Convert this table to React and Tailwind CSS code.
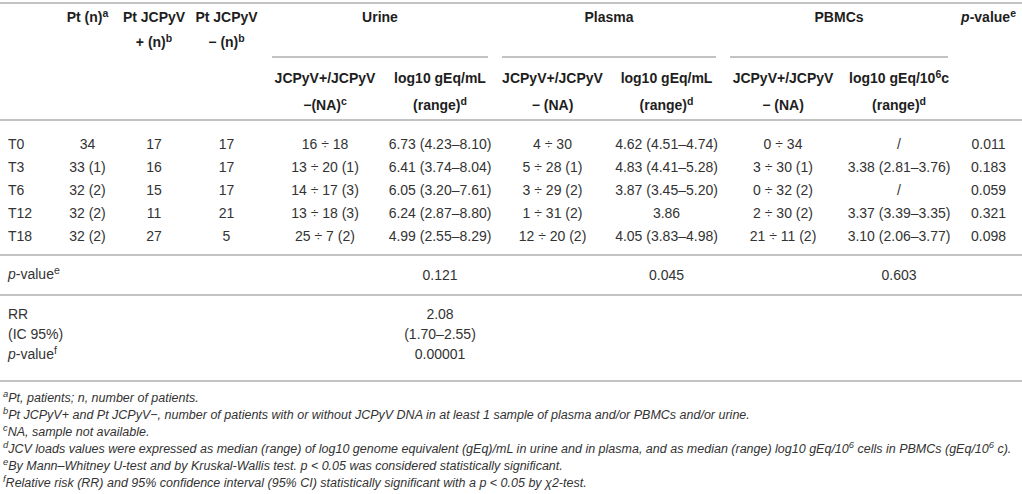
const rows = [
  ['T0', '34', '17', '17', '16 ÷ 18', '6.73 (4.23–8.10)', '4 ÷ 30', '4.62 (4.51–4.74)', '0 ÷ 34', '/', '0.011'],
  ['T3', '33 (1)', '16', '17', '13 ÷ 20 (1)', '6.41 (3.74–8.04)', '5 ÷ 28 (1)', '4.83 (4.41–5.28)', '3 ÷ 30 (1)', '3.38 (2.81–3.76)', '0.183'],
  ['T6', '32 (2)', '15', '17', '14 ÷ 17 (3)', '6.05 (3.20–7.61)', '3 ÷ 29 (2)', '3.87 (3.45–5.20)', '0 ÷ 32 (2)', '/', '0.059'],
  ['T12', '32 (2)', '11', '21', '13 ÷ 18 (3)', '6.24 (2.87–8.80)', '1 ÷ 31 (2)', '3.86', '2 ÷ 30 (2)', '3.37 (3.39–3.35)', '0.321'],
  ['T18', '32 (2)', '27', '5', '25 ÷ 7 (2)', '4.99 (2.55–8.29)', '12 ÷ 20 (2)', '4.05 (3.83–4.98)', '21 ÷ 11 (2)', '3.10 (2.06–3.77)', '0.098'],
];

const widths = [55, 65, 68, 77, 120, 110, 115, 113, 120, 112, 67];

const notes = [
  ['a', <>Pt, patients; n, number of patients.</>],
  ['b', <>Pt JCPyV+ and Pt JCPyV−, number of patients with or without JCPyV DNA in at least 1 sample of plasma and/or PBMCs and/or urine.</>],
  ['c', <>NA, sample not available.</>],
  ['d', <>JCV loads values were expressed as median (range) of log10 genome equivalent (gEq)/mL in urine and in plasma, and as median (range) log10 gEq/10<sup>6</sup> cells in PBMCs (gEq/10<sup>6</sup> c).</>],
  ['e', <>By Mann–Whitney U-test and by Kruskal-Wallis test. p &lt; 0.05 was considered statistically significant.</>],
  ['f', <>Relative risk (RR) and 95% confidence interval (95% CI) statistically significant with a p &lt; 0.05 by χ2-test.</>],
];

function Group({ label }) {
  return (
    <th colSpan={2} className="p-0 align-top font-bold">
      <div className="h-[52px] pt-[1px] leading-[25px]">{label}</div>
      <div className="mx-[7px] h-[2px] bg-[#c3c3c3]" />
    </th>
  );
}

export default function App() {
  const line = 'border-b-2 border-[#c3c3c3]';
  const sub = `p-0 pt-[7px] align-top leading-[27px] font-bold ${line}`;
  const top = `p-0 pt-[1px] align-top leading-[25px] font-bold ${line}`;

  return (
    <div className="w-[1022px] h-[494px] overflow-hidden bg-white pt-[2px] text-[14px] text-[#333] font-['Liberation_Sans',Arial,sans-serif]">
      <table className="w-full table-fixed border-collapse text-center">
        <colgroup>
          {widths.map((w, i) => (
            <col key={i} style={{ width: w }} />
          ))}
        </colgroup>
        <thead className="text-[#1e1e1e]">
          <tr className="border-t-2 border-[#c3c3c3]">
            <th rowSpan={2} className={top} />
            <th rowSpan={2} className={top}>
              Pt (n)<sup>a</sup>
            </th>
            <th rowSpan={2} className={top}>
              Pt JCPyV
              <br />+ (n)<sup>b</sup>
            </th>
            <th rowSpan={2} className={top}>
              Pt JCPyV
              <br />− (n)<sup>b</sup>
            </th>
            <Group label="Urine" />
            <Group label="Plasma" />
            <Group label="PBMCs" />
            <th rowSpan={2} className={top}>
              <i>p</i>-value<sup>e</sup>
            </th>
          </tr>
          <tr>
            <th className={sub}>
              JCPyV+/JCPyV
              <br />
              −(NA)<sup>c</sup>
            </th>
            <th className={sub}>
              log10 gEq/mL
              <br />
              (range)<sup>d</sup>
            </th>
            <th className={sub}>
              JCPyV+/JCPyV
              <br />− (NA)
            </th>
            <th className={sub}>
              log10 gEq/mL
              <br />
              (range)<sup>d</sup>
            </th>
            <th className={sub}>
              JCPyV+/JCPyV
              <br />− (NA)
            </th>
            <th className={sub}>
              log10 gEq/10<sup>6</sup>c
              <br />
              (range)<sup>d</sup>
            </th>
          </tr>
        </thead>
        <tbody>
          {rows.map((r, ri) => {
            const pad = ri === 0 ? 'pt-[12px]' : ri === rows.length - 1 ? 'pb-[6px]' : '';
            return (
              <tr key={r[0]} className={ri === rows.length - 1 ? line : ''}>
                {r.map((c, ci) => (
                  <td
                    key={ci}
                    className={`px-0 leading-[23px] ${pad} ${ci === 0 ? 'pl-2 text-left' : ''}`}
                  >
                    {c}
                  </td>
                ))}
              </tr>
            );
          })}
          <tr className={line}>
            <td colSpan={5} className="pl-2 pt-[7px] pb-[8px] text-left leading-[23px]">
              <i>p</i>-value<sup>e</sup>
            </td>
            <td className="leading-[23px]">0.121</td>
            <td />
            <td className="leading-[23px]">0.045</td>
            <td />
            <td className="leading-[23px]">0.603</td>
            <td />
          </tr>
          <tr>
            <td colSpan={5} className="pl-2 pt-[8px] text-left leading-[20px]">RR</td>
            <td className="pt-[8px] leading-[20px]">2.08</td>
            <td colSpan={5} />
          </tr>
          <tr>
            <td colSpan={5} className="pl-2 text-left leading-[20px]">(IC 95%)</td>
            <td className="leading-[20px]">(1.70–2.55)</td>
            <td colSpan={5} />
          </tr>
          <tr className={line}>
            <td colSpan={5} className="pl-2 pb-[16px] text-left leading-[20px]">
              <i>p</i>-value<sup>f</sup>
            </td>
            <td className="pb-[16px] leading-[20px]">0.00001</td>
            <td colSpan={5} />
          </tr>
        </tbody>
      </table>

      <div className="pt-[8px] pl-[3px] text-[12.5px] italic leading-[17px] text-[#333]">
        {notes.map(([k, t]) => (
          <div key={k} className="whitespace-nowrap">
            <sup>{k}</sup>
            {t}
          </div>
        ))}
      </div>
    </div>
  );
}
